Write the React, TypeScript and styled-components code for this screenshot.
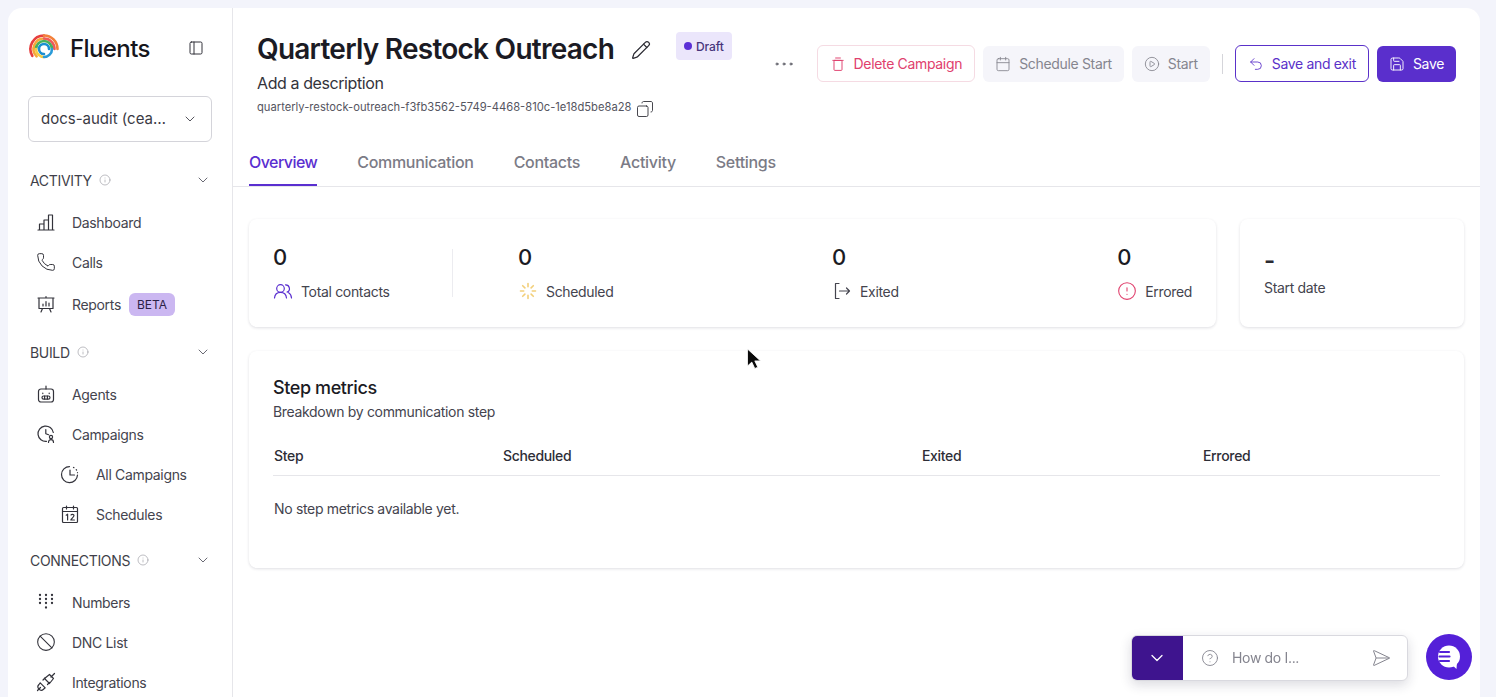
import React from 'react'
import styled, { createGlobalStyle } from 'styled-components'
import {
  Phone,
  Ban,
  Info,
  ChevronDown,
  PanelLeft,
  Pencil,
  Copy,
  Ellipsis,
  Calendar,
  CirclePlay,
  Undo2,
  Save as SaveIcon,
  CircleAlert,
  CircleHelp,
  SendHorizontal,
} from 'lucide-react'

const GlobalStyle = createGlobalStyle`
  html, body {
    margin: 0;
    height: 100%;
    overflow: hidden;
    background: #f3f4fb;
  }
  body {
    font-family: Inter, 'Liberation Sans', sans-serif;
    letter-spacing: -0.33px;
    color: #1c1c24;
  }
  * { box-sizing: border-box; }
`

const IconSvg = ({ children, size = 20 }: any) => (
  <svg
    width={size}
    height={size}
    viewBox="0 0 20 20"
    fill="none"
    stroke="currentColor"
    strokeWidth={1.2}
    strokeLinecap="round"
    strokeLinejoin="round"
  >
    {children}
  </svg>
)

const BarsIcon = () => (
  <IconSvg>
    <path d="M2 18h16M3.500 18v-6h4.500v6M8 18V8h4.500v10M12.500 18V3h4v15" />
  </IconSvg>
)

const ReportIcon = () => (
  <IconSvg>
    <path d="M2 4h16M3 4v10.500h14V4M10 4V2.500M6.500 14.500 5 18M13.500 14.500 15 18" />
    <path d="M7 12v-2M10 12V7.500M13 12V9" />
  </IconSvg>
)

const BotIcon = () => (
  <IconSvg>
    <path d="M10 2v3" />
    <rect x="2.5" y="5" width="15" height="13" rx="2.5" />
    <rect x="6" y="12" width="8" height="3.2" rx="1.6" />
    <path d="M6.800 9v.6M13.200 9v.6M8.600 12v3M11.400 12v3" />
  </IconSvg>
)

const CampaignIcon = () => (
  <IconSvg>
    <path d="M10.500 17.400A7.700 7.700 0 1 1 17.300 8.500" />
    <path d="M9.800 5.500v4.200l2.800 1" />
    <circle cx="15" cy="13" r="1.6" />
    <path d="M12.500 18.500c0-1.700 1-2.800 2.500-2.800s2.500 1.100 2.500 2.800" />
  </IconSvg>
)

const ClockDashIcon = () => (
  <IconSvg>
    <path d="M17.500 11a8 8 0 1 1-8-8.400" />
    <path d="M10 6v5h4.500" />
    <path d="M13.500 3.400l.5.3M16.200 5.600l.4.5M17.500 8.500v.2" />
  </IconSvg>
)

const ScheduleIcon = () => (
  <IconSvg>
    <rect x="2.5" y="3.5" width="15" height="15" rx="1" />
    <path d="M2.500 7.500h15M6.500 2v3M13.500 2v3" />
    <path d="M6.200 11.200 7.600 10.200V16M11 11c.4-.9 2.800-1.100 3 .4.2 1.400-2.400 2.800-3.200 4.600h3.600" />
  </IconSvg>
)

const DialIcon = () => (
  <svg width="20" height="20" viewBox="0 0 20 20" fill="currentColor">
    {[4, 10, 16].flatMap((x) =>
      [3, 7, 11].map((y) => <circle key={`${x}-${y}`} cx={x} cy={y} r="1.15" />),
    )}
    <circle cx="10" cy="15.5" r="1.15" />
  </svg>
)

const PlugIcon = () => (
  <IconSvg>
    <path d="M1.500 18.500 4.500 15.500" />
    <path d="M4.200 10.800 9.200 15.800 7.500 17.200A3 3 0 0 1 3 12.500Z" />
    <path d="M7 8 9 6M11.500 12.500 13.500 10.500" />
    <path d="M8.500 6.500 13.500 2.500 17.500 6.500 13.500 11.500Z" />
    <path d="M15 5l3.500-3.500" />
  </IconSvg>
)

const TrashIcon = () => (
  <IconSvg size={16}>
    <path d="M7 2.500h6M3.500 5.500h13" />
    <rect x="5" y="5.500" width="10" height="12.500" rx="1" />
  </IconSvg>
)

const PeopleIcon = () => (
  <IconSvg>
    <circle cx="7.500" cy="7.500" r="3.800" />
    <path d="M1.500 17c.3-3.400 2.800-5.700 6-5.700s5.700 2.300 6 5.700" />
    <path d="M12.500 3.800a3.800 3.800 0 0 1 1.600 7.300M15.600 11.800c1.700.9 2.700 2.800 2.900 5.200" />
  </IconSvg>
)

const ExitIcon = () => (
  <IconSvg>
    <path d="M7 2.500H3.500v15H7" />
    <path d="M7.500 10h10M14.500 7l3 3-3 3" />
  </IconSvg>
)

const SpinnerIcon = () => (
  <svg width="20" height="20" viewBox="0 0 20 20" fill="none" stroke="#f2cf7a" strokeWidth={1.6} strokeLinecap="round">
    <path d="M10 2.500v3.200M10 14.300v3.200M2.500 10h3.200M14.300 10h3.200M4.700 4.700l2.200 2.200M13.100 13.100l2.200 2.200M4.700 15.300l2.200-2.200M13.100 6.900l2.200-2.200" />
  </svg>
)

const Shell = styled.div`
  display: flex;
  height: 760px;
  margin: 8px 16px 0 8px;
  background: #fff;
  border-radius: 14px 14px 0 0;
  overflow: hidden;
`

const Sidebar = styled.aside`
  flex: 0 0 225px;
  border-right: 1px solid #e6e6ea;
  padding: 24px 20px 0;
`

const LogoRow = styled.div`
  display: flex;
  align-items: center;
  height: 32px;
  margin-bottom: 32px;
`

const LogoWord = styled.span`
  font-size: 24px;
  font-weight: 500;
  letter-spacing: -0.6px;
  color: #16161c;
  margin-left: 10px;
`

const CollapseBtn = styled.span`
  display: flex;
  margin-left: auto;
  margin-right: 8px;
  color: #33333b;
`

const OrgSelect = styled.div`
  display: flex;
  align-items: center;
  justify-content: space-between;
  width: 184px;
  height: 46px;
  padding: 0 13px 1px 12px;
  border: 1px solid #d4d4da;
  border-radius: 6px;
  font-size: 15px;
  letter-spacing: 0;
  color: #3a3a44;
  margin-bottom: 19px;
`

const SectionHead = styled.div<{ $first?: boolean }>`
  display: flex;
  align-items: center;
  height: 38px;
  padding: 0 1px 0 2px;
  margin: ${(p) => (p.$first ? 0 : 7)}px 0 3px;
  font-size: 14px;
  color: #3f3f49;
  & > svg:first-of-type {
    margin-left: 7px;
    color: #9a9aa3;
  }
  & > svg:last-of-type {
    margin-left: auto;
    color: #5f5f69;
  }
`

const NavItem = styled.div<{ $nested?: boolean; $tall?: boolean }>`
  display: flex;
  align-items: center;
  gap: 16px;
  height: ${(p) => (p.$tall ? 44 : 40)}px;
  padding-left: ${(p) => (p.$nested ? 32 : 8)}px;
  font-size: 14px;
  color: #44444e;
  & > svg {
    flex: none;
    color: #33333b;
  }
`

const BetaTag = styled.span`
  margin-left: -8px;
  padding: 0 8px;
  height: 23px;
  line-height: 23px;
  font-size: 12px;
  letter-spacing: 0;
  border-radius: 6px;
  background: #cbb7f1;
  color: #2b2146;
`

const Main = styled.main`
  flex: 1;
  min-width: 0;
  position: relative;
`

const Header = styled.header`
  display: flex;
  justify-content: space-between;
  height: 132px;
  padding: 24px 24px 0 24px;
`

const TitleBlock = styled.div`
  display: flex;
  flex-direction: column;
`

const TitleRow = styled.div`
  display: flex;
  align-items: flex-start;
  height: 34px;
`

const Title = styled.h1`
  margin: 0;
  font-size: 28px;
  line-height: 34px;
  font-weight: 600;
  letter-spacing: -0.75px;
  color: #1b1b24;
`

const EditBtn = styled.span`
  display: flex;
  margin: 8px 0 0 17px;
  color: #2c2c34;
`

const DraftBadge = styled.span`
  display: flex;
  align-items: center;
  gap: 4px;
  height: 28px;
  margin-left: 25px;
  padding: 0 8px;
  border-radius: 4px;
  background: #ebe6fb;
  font-size: 12px;
  font-weight: 500;
  letter-spacing: -0.1px;
  color: #47357c;
  &::before {
    content: '';
    width: 8px;
    height: 8px;
    border-radius: 50%;
    background: #5b2fd6;
  }
`

const Description = styled.div`
  margin-top: 5px;
  font-size: 16px;
  line-height: 24px;
  letter-spacing: -0.41px;
  color: #33333b;
`

const Slug = styled.div`
  display: flex;
  align-items: center;
  gap: 5px;
  margin-top: 4px;
  height: 16px;
  font-size: 11.2px;
  letter-spacing: 0;
  color: #55555f;
  & > svg {
    margin-top: 4px;
    color: #33333b;
    transform: scaleX(-1);
  }
`

const Actions = styled.div`
  display: flex;
  align-items: center;
  gap: 8px;
  height: 37px;
  margin-top: 13px;
`

const MoreBtn = styled.span`
  display: flex;
  margin-right: 13px;
  color: #55555f;
`

const ActionBtn = styled.button<{ $kind: 'danger' | 'muted' | 'outline' | 'primary' }>`
  display: flex;
  align-items: center;
  gap: 8px;
  height: ${(p) => (p.$kind === 'danger' || p.$kind === 'outline' ? 37 : 36)}px;
  padding: 0 12px;
  border-radius: 6px;
  font: inherit;
  font-size: 14px;
  letter-spacing: inherit;
  white-space: nowrap;
  ${(p) =>
    p.$kind === 'danger' &&
    `background:#fff;border:1px solid #f5dbe3;color:#e0406d;`}
  ${(p) =>
    p.$kind === 'muted' &&
    `background:#f5f5fa;border:none;color:#85858f;`}
  ${(p) =>
    p.$kind === 'outline' &&
    `background:#fff;border:1px solid #5a31c9;color:#5a31c9;`}
  ${(p) =>
    p.$kind === 'primary' &&
    `background:#5a2fcc;border:none;color:#fff;`}
`

const Separator = styled.span`
  width: 1px;
  height: 20px;
  margin: 0 4px;
  background: #d5d5da;
`

const Tabs = styled.nav`
  display: flex;
  gap: 40px;
  height: 47px;
  padding: 0 16px;
  border-bottom: 1px solid #e6e6ea;
`

const Tab = styled.span<{ $active?: boolean }>`
  display: flex;
  align-items: center;
  height: 46px;
  font-size: 16px;
  font-weight: 500;
  letter-spacing: ${(p) => (p.$active ? -0.55 : -0.3)}px;
  color: ${(p) => (p.$active ? '#5a2fd0' : '#7b7b86')};
  border-bottom: 2px solid ${(p) => (p.$active ? '#5a2fd0' : 'transparent')};
`

const Content = styled.div`
  display: flex;
  flex-direction: column;
  gap: 24px;
  padding: 32px 16px 0;
`

const Card = styled.section`
  background: #fff;
  border-radius: 8px;
  box-shadow: 0 1px 3px rgba(30, 30, 60, 0.14);
`

const StatsRow = styled.div`
  display: flex;
  gap: 24px;
`

const StatsCard = styled(Card)`
  display: flex;
  flex: 1;
  height: 108px;
  padding: 24px;
`

const StatLead = styled.div`
  flex: 0 0 180px;
  height: 48px;
  margin-top: 6px;
  border-right: 1px solid #ececf0;
`

const LeadInner = styled.div`
  margin-top: -6px;
`

const StatRest = styled.div`
  display: flex;
  flex: 1;
  justify-content: space-between;
  padding-left: 65px;
`

const StatValue = styled.div`
  font-size: 22px;
  line-height: 28px;
  font-weight: 500;
  letter-spacing: 0;
  color: #1b1b24;
`

const StatLabel = styled.div`
  display: flex;
  align-items: center;
  gap: 8px;
  height: 20px;
  margin-top: 10px;
  font-size: 14px;
  color: #44444e;
`

const AccentIcon = styled.span`
  display: flex;
  color: #5a2fd0;
`

const DateCard = styled(Card)`
  flex: 0 0 224px;
  height: 108px;
  padding: 24px;
`

const DateValue = styled.div`
  margin-top: 4px;
  font-size: 24px;
  line-height: 28px;
  font-weight: 600;
  color: #2a2a32;
`

const DateLabel = styled.div`
  margin-top: 3px;
  font-size: 14px;
  line-height: 20px;
  color: #44444e;
`

const StepCard = styled(Card)`
  height: 217px;
  padding: 25px 24px 24px;
`

const StepTitle = styled.h2`
  margin: 0;
  font-size: 18px;
  line-height: 24px;
  font-weight: 500;
  letter-spacing: -0.4px;
  color: #1b1b24;
`

const StepSub = styled.div`
  font-size: 14px;
  line-height: 24px;
  color: #44444e;
`

const StepHead = styled.div`
  display: grid;
  grid-template-columns: 229px 419px 281px 1fr;
  align-items: center;
  height: 40px;
  margin-top: 12px;
  padding-left: 1px;
  border-bottom: 1px solid #e6e6ea;
  font-size: 14px;
  font-weight: 500;
  color: #2e2e37;
`

const EmptyRow = styled.div`
  display: flex;
  align-items: center;
  height: 64px;
  padding-left: 1px;
  font-size: 14px;
  color: #44444e;
`

const ChatBar = styled.div`
  position: fixed;
  left: 1131px;
  top: 635px;
  display: flex;
  width: 277px;
  height: 46px;
  background: #fff;
  border: 1px solid #d9d9df;
  border-radius: 6px;
  overflow: hidden;
  box-shadow: 0 4px 12px rgba(30, 30, 60, 0.16);
`

const ChatToggle = styled.span`
  display: flex;
  align-items: center;
  justify-content: center;
  flex: 0 0 51px;
  padding-right: 2px;
  background: #3e148e;
  color: #fff;
`

const ChatInput = styled.div`
  display: flex;
  flex: 1;
  align-items: center;
  gap: 13px;
  padding: 0 16px 1px 18px;
  font-size: 14px;
  color: #85858f;
  & > svg:last-child {
    margin-left: auto;
  }
`

const ChatBubble = styled.span`
  position: fixed;
  left: 1426px;
  top: 634px;
  display: flex;
  align-items: center;
  justify-content: center;
  width: 46px;
  height: 46px;
  border-radius: 50%;
  background: #5420d8;
`

const Cursor = styled.svg`
  position: fixed;
  left: 746px;
  top: 348px;
`

const Logo = () => (
  <svg width="32" height="32" viewBox="0 0 32 32" fill="none" strokeLinecap="round" strokeWidth="2.6">
    <path d="M4.300 23.800A13.500 13.500 0 0 1 16 3.500" stroke="#e63f3f" />
    <path d="M16 3.500A13.500 13.500 0 0 1 29.500 17" stroke="#f3803a" />
    <path d="M8.600 24.400A10.500 10.500 0 0 1 16 6.500" stroke="#f6a83a" />
    <path d="M16 6.500A10.500 10.500 0 0 1 26.500 17" stroke="#ef5a5a" />
    <path d="M8 17A8 8 0 0 1 24 17" stroke="#49b05a" />
    <path d="M8 17A8 8 0 0 0 16 25" stroke="#f5cc45" />
    <path d="M16 25A8 8 0 0 0 24 17" stroke="#2a9bd8" />
    <path d="M16 22A5 5 0 1 1 21 17" stroke="#1a8fd1" />
  </svg>
)

const Section = ({ label, first }: any) => (
  <SectionHead $first={first}>
    {label}
    <Info size={12} strokeWidth={1.3} />
    <ChevronDown size={16} strokeWidth={1.4} />
  </SectionHead>
)

const TABS = ['Overview', 'Communication', 'Contacts', 'Activity', 'Settings']

const App = () => {
  return (
    <>
      <GlobalStyle />
      <Shell>
        <Sidebar>
          <LogoRow>
            <Logo />
            <LogoWord>Fluents</LogoWord>
            <CollapseBtn>
              <PanelLeft size={16} strokeWidth={1.5} />
            </CollapseBtn>
          </LogoRow>
          <OrgSelect>
            docs-audit (cea…
            <ChevronDown size={16} strokeWidth={1.3} />
          </OrgSelect>
          <Section label="ACTIVITY" first />
          <NavItem>
            <BarsIcon />
            Dashboard
          </NavItem>
          <NavItem>
            <Phone size={20} strokeWidth={1.2} />
            Calls
          </NavItem>
          <NavItem $tall>
            <ReportIcon />
            Reports
            <BetaTag>BETA</BetaTag>
          </NavItem>
          <Section label="BUILD" />
          <NavItem>
            <BotIcon />
            Agents
          </NavItem>
          <NavItem>
            <CampaignIcon />
            Campaigns
          </NavItem>
          <NavItem $nested>
            <ClockDashIcon />
            All Campaigns
          </NavItem>
          <NavItem $nested>
            <ScheduleIcon />
            Schedules
          </NavItem>
          <Section label="CONNECTIONS" />
          <NavItem>
            <DialIcon />
            Numbers
          </NavItem>
          <NavItem>
            <Ban size={20} strokeWidth={1.3} />
            DNC List
          </NavItem>
          <NavItem>
            <PlugIcon />
            Integrations
          </NavItem>
        </Sidebar>
        <Main>
          <Header>
            <TitleBlock>
              <TitleRow>
                <Title>Quarterly Restock Outreach</Title>
                <EditBtn>
                  <Pencil size={20} strokeWidth={1.5} />
                </EditBtn>
                <DraftBadge>Draft</DraftBadge>
              </TitleRow>
              <Description>Add a description</Description>
              <Slug>
                quarterly-restock-outreach-f3fb3562-5749-4468-810c-1e18d5be8a28
                <Copy size={18} strokeWidth={1.2} />
              </Slug>
            </TitleBlock>
            <Actions>
              <MoreBtn>
                <Ellipsis size={24} strokeWidth={1} />
              </MoreBtn>
              <ActionBtn $kind="danger">
                <TrashIcon />
                Delete Campaign
              </ActionBtn>
              <ActionBtn $kind="muted">
                <Calendar size={16} strokeWidth={1.3} />
                Schedule Start
              </ActionBtn>
              <ActionBtn $kind="muted">
                <CirclePlay size={16} strokeWidth={1.3} />
                Start
              </ActionBtn>
              <Separator />
              <ActionBtn $kind="outline">
                <Undo2 size={16} strokeWidth={1.3} />
                Save and exit
              </ActionBtn>
              <ActionBtn $kind="primary">
                <SaveIcon size={16} strokeWidth={1.4} />
                Save
              </ActionBtn>
            </Actions>
          </Header>
          <Tabs>
            {TABS.map((t, i) => (
              <Tab key={t} $active={i === 0}>
                {t}
              </Tab>
            ))}
          </Tabs>
          <Content>
            <StatsRow>
              <StatsCard>
                <StatLead>
                  <LeadInner>
                    <StatValue>0</StatValue>
                    <StatLabel>
                      <AccentIcon>
                        <PeopleIcon />
                      </AccentIcon>
                      Total contacts
                    </StatLabel>
                  </LeadInner>
                </StatLead>
                <StatRest>
                  <div>
                    <StatValue>0</StatValue>
                    <StatLabel>
                      <SpinnerIcon />
                      Scheduled
                    </StatLabel>
                  </div>
                  <div>
                    <StatValue>0</StatValue>
                    <StatLabel>
                      <ExitIcon />
                      Exited
                    </StatLabel>
                  </div>
                  <div>
                    <StatValue>0</StatValue>
                    <StatLabel>
                      <CircleAlert size={20} strokeWidth={1.3} color="#e0406d" />
                      Errored
                    </StatLabel>
                  </div>
                </StatRest>
              </StatsCard>
              <DateCard>
                <DateValue>-</DateValue>
                <DateLabel>Start date</DateLabel>
              </DateCard>
            </StatsRow>
            <StepCard>
              <StepTitle>Step metrics</StepTitle>
              <StepSub>Breakdown by communication step</StepSub>
              <StepHead>
                <span>Step</span>
                <span>Scheduled</span>
                <span>Exited</span>
                <span>Errored</span>
              </StepHead>
              <EmptyRow>No step metrics available yet.</EmptyRow>
            </StepCard>
          </Content>
        </Main>
      </Shell>
      <ChatBar>
        <ChatToggle>
          <ChevronDown size={20} strokeWidth={1.5} />
        </ChatToggle>
        <ChatInput>
          <CircleHelp size={18} strokeWidth={1.2} />
          How do I...
          <SendHorizontal size={20} strokeWidth={1.2} />
        </ChatInput>
      </ChatBar>
      <ChatBubble>
        <svg width="26" height="26" viewBox="0 0 26 26">
          <circle cx="13" cy="12.5" r="11" fill="#fff" />
          <path d="M15 20 20.500 25 21 17Z" fill="#fff" />
          <path d="M4 8h9M3.500 12.500h10M4 17h9" stroke="#5420d8" strokeWidth="2.2" strokeLinecap="round" />
        </svg>
      </ChatBubble>
      <Cursor width="18" height="24" viewBox="0 0 18 24">
        <path d="M1.500 1v17l4.300-3.900 3 6.400 3-1.300-3-6.300h5.700Z" fill="#0a0a0a" stroke="#fff" strokeWidth="0.8" />
      </Cursor>
    </>
  )
}

export default App
